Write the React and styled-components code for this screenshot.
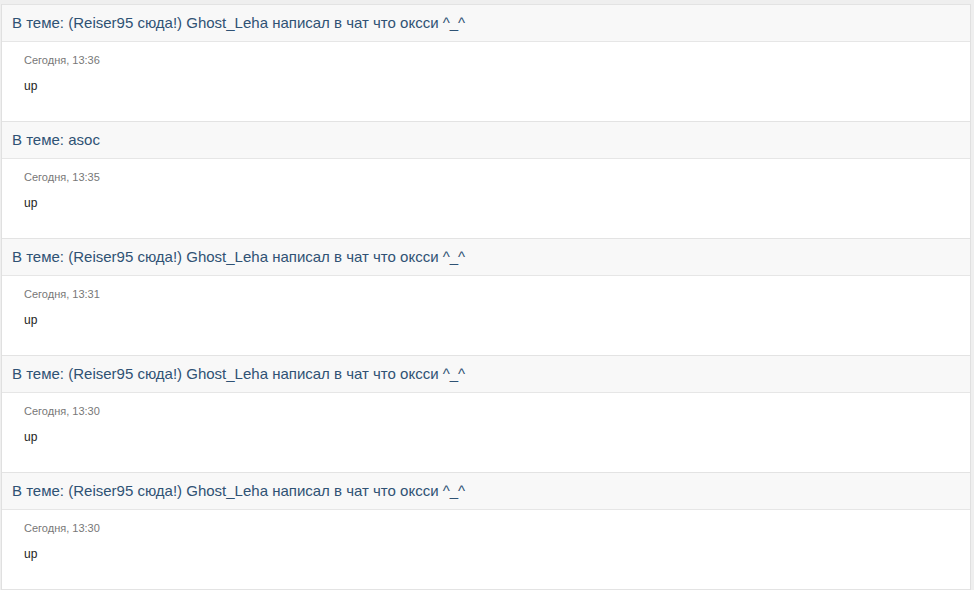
import React from "react";
import styled, { createGlobalStyle } from "styled-components";

const GlobalStyle = createGlobalStyle`
  html, body {
    margin: 0;
    padding: 0;
    background: #efefef;
    font-family: "Liberation Sans", Arial, sans-serif;
  }
`;

const Container = styled.div`
  margin: 4px 0 0 1px;
  width: 970px;
  display: flex;
  flex-direction: column;
  border-left: 1px solid #e0e0e0;
  border-right: 1px solid #e0e0e0;
  box-sizing: border-box;
`;

const Item = styled.div`
  display: flex;
  flex-direction: column;
  border-top: 1px solid #e3e3e3;
  &:last-child {
    border-bottom: 1px solid #e3e3e3;
  }
`;

const Header = styled.div`
  height: 37px;
  box-sizing: border-box;
  display: flex;
  align-items: center;
  padding: 0 0 1px 10px;
  background: #f8f8f8;
  border-bottom: 1px solid #e6e6e6;
  color: #2f5274;
  font-size: 15px;
`;

const Body = styled.div`
  height: 79px;
  box-sizing: border-box;
  padding: 11px 22px 0;
  background: #fff;
  display: flex;
  flex-direction: column;
  gap: 12px;
`;

const Date = styled.div`
  font-size: 11px;
  line-height: 14px;
  color: #777;
`;

const Text = styled.div`
  font-size: 12px;
  line-height: 14px;
  color: #222;
`;

const long = "(Reiser95 сюда!) Ghost_Leha написал в чат что оксси ^_^";

const posts = [
  { id: 1, topic: long, date: "Сегодня, 13:36", text: "up" },
  { id: 2, topic: "asoc", date: "Сегодня, 13:35", text: "up" },
  { id: 3, topic: long, date: "Сегодня, 13:31", text: "up" },
  { id: 4, topic: long, date: "Сегодня, 13:30", text: "up" },
  { id: 5, topic: long, date: "Сегодня, 13:30", text: "up" },
];

const App = () => {
  return (
    <>
      <GlobalStyle />
      <Container>
        {posts.map((p) => (
          <Item key={p.id}>
            <Header>В теме: {p.topic}</Header>
            <Body>
              <Date>{p.date}</Date>
              <Text>{p.text}</Text>
            </Body>
          </Item>
        ))}
      </Container>
    </>
  );
};

export default App;
